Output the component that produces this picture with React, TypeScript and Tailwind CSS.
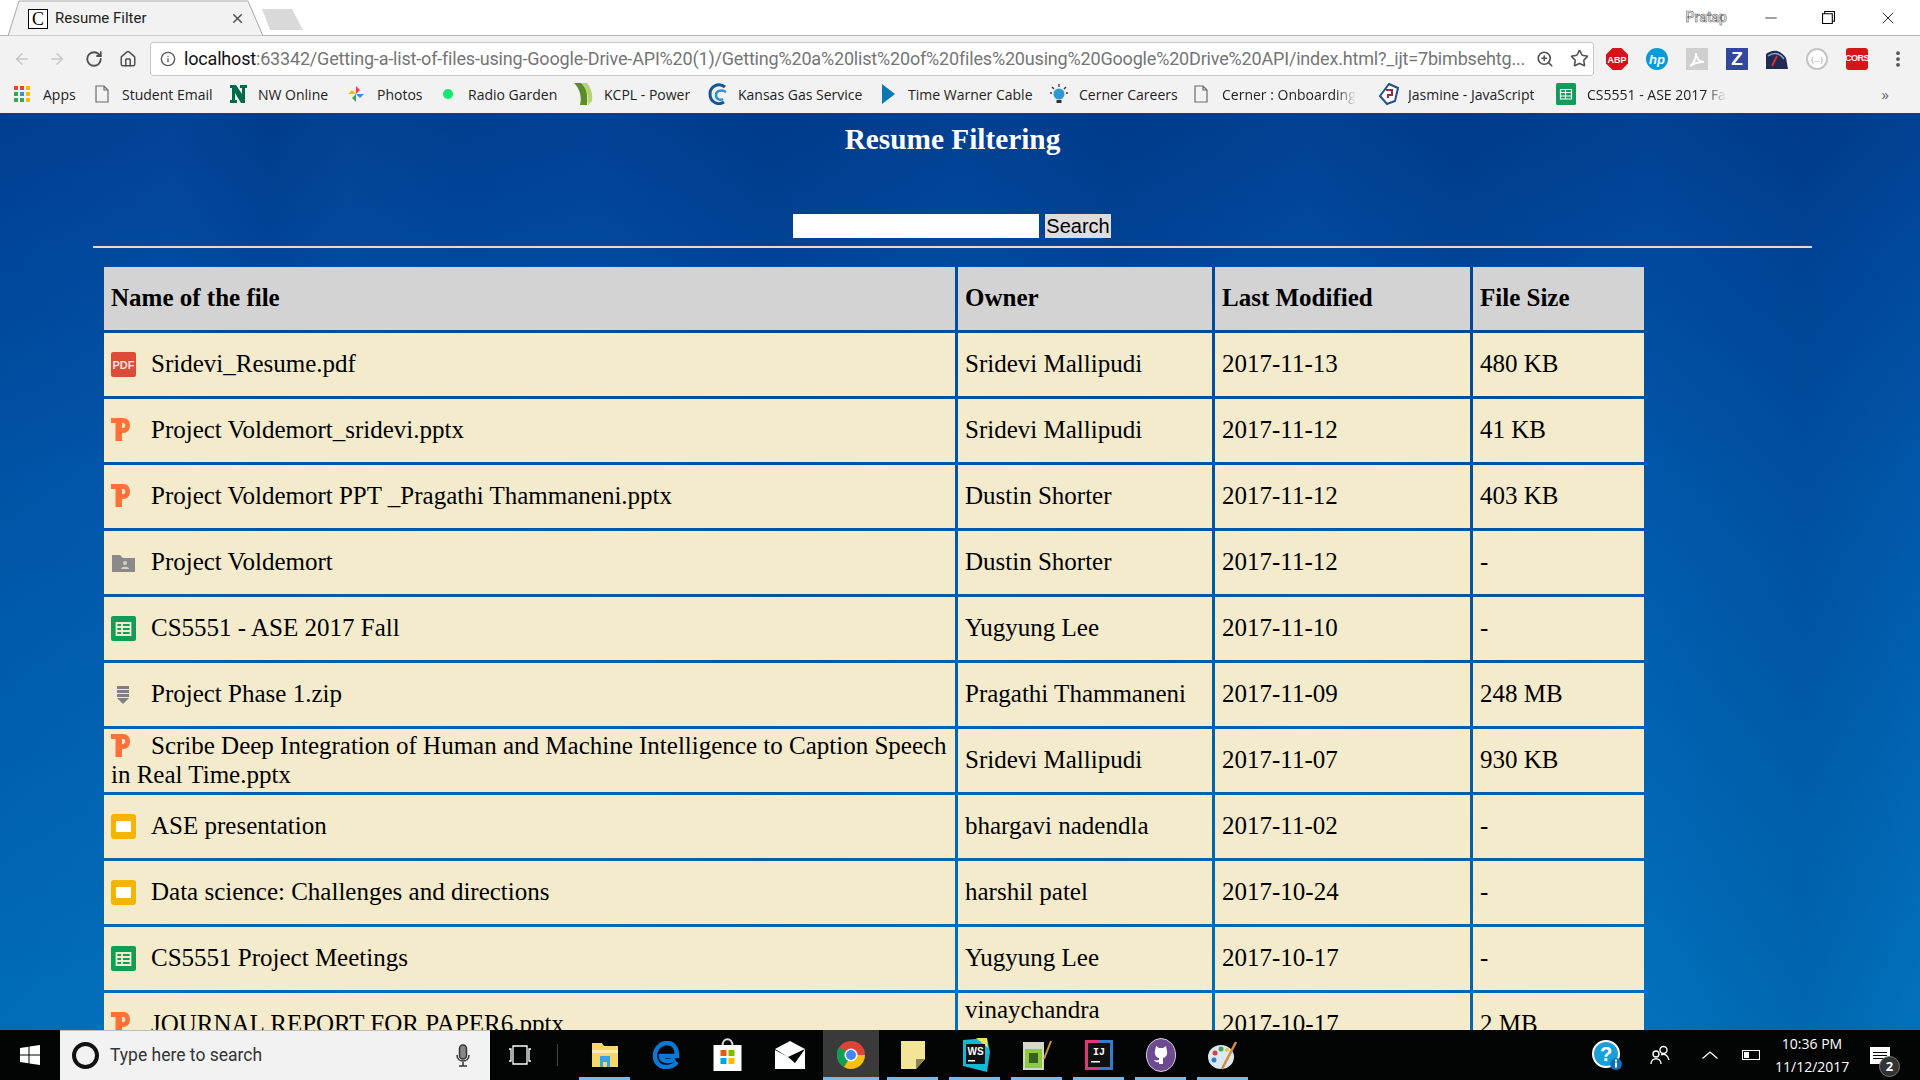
import { ArrowLeft, ArrowRight, Home, Info, Minus, MoreVertical, RotateCw, Star, X, ZoomIn } from "lucide-react";

const rows = [
  { icon: "pdf", name: "Sridevi_Resume.pdf", owner: "Sridevi Mallipudi", date: "2017-11-13", size: "480 KB" },
  { icon: "ppt", name: "Project Voldemort_sridevi.pptx", owner: "Sridevi Mallipudi", date: "2017-11-12", size: "41 KB" },
  { icon: "ppt", name: "Project Voldemort PPT _Pragathi Thammaneni.pptx", owner: "Dustin Shorter", date: "2017-11-12", size: "403 KB" },
  { icon: "folder", name: "Project Voldemort", owner: "Dustin Shorter", date: "2017-11-12", size: "-" },
  { icon: "sheet", name: "CS5551 - ASE 2017 Fall", owner: "Yugyung Lee", date: "2017-11-10", size: "-" },
  { icon: "zip", name: "Project Phase 1.zip", owner: "Pragathi Thammaneni", date: "2017-11-09", size: "248 MB" },
  { icon: "ppt", name: "Scribe Deep Integration of Human and Machine Intelligence to Caption Speech in Real Time.pptx", owner: "Sridevi Mallipudi", date: "2017-11-07", size: "930 KB" },
  { icon: "slides", name: "ASE presentation", owner: "bhargavi nadendla", date: "2017-11-02", size: "-" },
  { icon: "slides", name: "Data science: Challenges and directions", owner: "harshil patel", date: "2017-10-24", size: "-" },
  { icon: "sheet", name: "CS5551 Project Meetings", owner: "Yugyung Lee", date: "2017-10-17", size: "-" },
  { icon: "ppt", name: "JOURNAL REPORT FOR PAPER6.pptx", owner: "vinaychandra kommineni", date: "2017-10-17", size: "2 MB" },
];

function FileIcon({ type }: { type: string }) {
  const cls = "inline-block w-[25px] h-[25px] mr-[15px] align-[-5px]";
  if (type === "pdf")
    return (
      <svg viewBox="0 0 25 25" className={cls}>
        <rect width="25" height="25" rx="2" fill="#dd4b39" />
        <text x="12.5" y="16.500" textAnchor="middle" fontSize="11" fontWeight="700" fill="#f9e3df" fontFamily="Liberation Sans">PDF</text>
      </svg>
    );
  if (type === "ppt")
    return (
      <svg viewBox="0 0 25 25" className={cls}>
        <path d="M0 0h12c4.500 0 7 3 7 7.500s-2.500 7.500-7 7.500h-1v8H4.500V5H0z M11 5v5h1c1.500 0 2.300-1 2.300-2.500S13.500 5 12 5z" fill="#ff7138" fillRule="evenodd" />
      </svg>
    );
  if (type === "folder")
    return (
      <svg viewBox="0 0 25 25" className={cls}>
        <path d="M1 5h8l3 3h12v14H1z" fill="#8a8a8a" />
        <circle cx="14" cy="13" r="2" fill="#d8d2bd" />
        <path d="M10 19c0-3 8-3 8 0z" fill="#d8d2bd" />
      </svg>
    );
  if (type === "sheet")
    return (
      <svg viewBox="0 0 25 25" className={cls}>
        <rect width="25" height="25" rx="2" fill="#0f9d58" />
        <path d="M5.500 7h14v12h-14z M5.500 11h14 M5.500 15h14 M11 7v12" stroke="#f4ebcd" strokeWidth="1.800" fill="none" />
      </svg>
    );
  if (type === "zip")
    return (
      <svg viewBox="0 0 25 25" className={cls}>
        <path d="M6 4h12v3H6z M6 8h12v3H6z M6 12h12v3H6z M6 16h12l-6 6z" fill="#808080" />
      </svg>
    );
  return (
    <svg viewBox="0 0 25 25" className={cls}>
      <rect width="25" height="25" rx="3" fill="#f4b400" />
      <rect x="5" y="7" width="15" height="11" fill="#fff" />
    </svg>
  );
}

const DocGlyph = () => (
  <svg viewBox="0 0 14 18" className="w-[14px] h-[18px]" fill="#f2f2f2" stroke="#6b6b6b" strokeWidth="1.200">
    <path d="M1 1h8l4 4v12H1z M9 1v4h4" />
  </svg>
);

const SheetGlyph = () => (
  <svg viewBox="0 0 20 22" className="w-[20px] h-[22px]">
    <rect width="20" height="22" rx="1.500" fill="#0f9d58" />
    <path d="M4.500 6.500h11v9.500h-11z M4.500 9.500h11 M4.500 13h11 M9.500 6.500V16" stroke="#fff" strokeWidth="1.200" fill="none" />
  </svg>
);

const bookmarks = [
  {
    label: "Apps", width: "w-[81px]", gap: "gap-[13px]",
    icon: (
      <svg viewBox="0 0 16 16" className="w-[16px] h-[16px]">
        <path d="M0 0h4v4H0z M6 0h4v4H6z" fill="#ea4335" /><path d="M12 0h4v4h-4z M12 6h4v4h-4z" fill="#fbbc05" />
        <path d="M0 6h4v4H0z M0 12h4v4H0z M6 12h4v4H6z" fill="#34a853" /><path d="M6 6h4v4H6z" fill="#4285f4" /><path d="M12 12h4v4h-4z" fill="#fbbc05" />
      </svg>
    ),
  },
  { label: "Student Email", width: "w-[135px]", gap: "gap-[13px]", icon: <DocGlyph /> },
  {
    label: "NW Online", width: "w-[117px]", gap: "gap-[11px]",
    icon: (
      <svg viewBox="0 0 17 20" className="w-[17px] h-[20px]">
        <path d="M0 1h6l6 9V4h-2V1h7v3h-2v15h-4L5 9v7h2v3H0v-3h2V4H0z" fill="#006a4d" />
      </svg>
    ),
  },
  {
    label: "Photos", width: "w-[96px]", gap: "gap-[12px]",
    icon: (
      <svg viewBox="0 0 18 18" className="w-[18px] h-[18px]">
        <path d="M9 9V1l4 4z" fill="#ea4335" /><path d="M9 9h8l-4 4z" fill="#4285f4" /><path d="M9 9v8l-4-4z" fill="#34a853" /><path d="M9 9H1l4-4z" fill="#fbbc05" />
      </svg>
    ),
  },
  { label: "Radio Garden", width: "w-[131px]", gap: "gap-[15px]", icon: <span className="w-[10px] h-[10px] rounded-full bg-[#10e86f]" /> },
  {
    label: "KCPL - Power", width: "w-[134px]", gap: "gap-[10px]",
    icon: (
      <svg viewBox="0 0 20 24" className="w-[20px] h-[24px]">
        <path d="M0 1h7c5 4 7 10 6 22H6c2-8 0-16-6-22z" fill="#5b8c2a" /><path d="M7 1h6c4 5 6 11 5 18l-4 4c1-9-1-16-7-22z" fill="#b7d36b" />
      </svg>
    ),
  },
  {
    label: "Kansas Gas Service", width: "w-[174px]", gap: "gap-[10px]",
    icon: (
      <svg viewBox="0 0 20 22" className="w-[20px] h-[22px]" fill="none">
        <path d="M17 4C11-1 2 3 2 11s8 12 14 8" stroke="#14569b" strokeWidth="3" /><path d="M18 9c-5-3-10-1-10 3s4 6 7 4" stroke="#2b8fd0" strokeWidth="2.500" />
      </svg>
    ),
  },
  {
    label: "Time Warner Cable", width: "w-[168px]", gap: "gap-[13px]",
    icon: (
      <svg viewBox="0 0 13 20" className="w-[13px] h-[20px]"><path d="M0 0l13 10L0 20z" fill="#0a77b5" /></svg>
    ),
  },
  {
    label: "Cerner Careers", width: "w-[144px]", gap: "gap-[11px]",
    icon: (
      <svg viewBox="0 0 18 22" className="w-[18px] h-[22px]">
        <circle cx="9" cy="11" r="5.500" fill="#2c9ad1" /><path d="M6.500 17h5v3h-5z" fill="#333" />
        <path d="M9 1v3 M2 4l2 2 M16 4l-2 2 M0 10h2 M16 10h2" stroke="#333" strokeWidth="1.300" />
      </svg>
    ),
  },
  { label: "Cerner : Onboarding", width: "w-[185px]", gap: "gap-[14px]", icon: <DocGlyph />, fade: true },
  {
    label: "Jasmine - JavaScript", width: "w-[177px]", gap: "gap-[9px]",
    icon: (
      <svg viewBox="0 0 20 22" className="w-[20px] h-[22px]">
        <path d="M10 1l9 4-3 13-8 3-7-8z" fill="#fff" stroke="#1f4f8f" strokeWidth="2" />
        <path d="M7 7h6v5H9v3" stroke="#b22234" strokeWidth="2" fill="none" />
      </svg>
    ),
  },
  { label: "CS5551 - ASE 2017 Fa", width: "w-[172px]", gap: "gap-[11px]", icon: <SheetGlyph />, fade: true },
];

function Extension({ children }: { children: React.ReactNode }) {
  return <div className="w-[40px] flex items-center justify-center">{children}</div>;
}

function ChromeBar() {
  return (
    <div className="shrink-0 font-['Open_Sans','Noto_Sans',sans-serif] text-[#222]">
      {/* tab strip */}
      <div className="relative h-[36px] bg-white border-b border-[#b4b4b4] flex items-center">
        <svg viewBox="0 0 310 36" className="absolute left-0 top-0 w-[310px] h-[36px]">
          <path d="M8 36L19 1h229l15 35z" fill="#f2f2f2" stroke="#a8a8a8" />
          <path d="M262 9h30l11 21H270z" fill="#d9d9d9" />
        </svg>
        <div className="relative mt-[2px] ml-[28px] w-[20px] h-[20px] bg-white border border-black flex items-center justify-center font-['Liberation_Serif',serif] text-[18px] leading-none text-black">C</div>
        <span className="relative mt-[2px] ml-[7px] text-[15px] leading-none font-['Roboto',sans-serif]">Resume Filter</span>
        <X className="relative mt-[2px] ml-[83px] w-[15px] h-[15px] text-[#555]" strokeWidth={2.500} />
        <div className="ml-auto flex items-center h-full">
          <span className="text-[14px] font-semibold text-[#eeeeee] mr-[15px] [-webkit-text-stroke:0.5px_#555] font-['Roboto',sans-serif]">Pratap</span>
          <div className="w-[58px] flex justify-center"><Minus className="w-[18px] h-[18px] text-black" strokeWidth={1} /></div>
          <div className="w-[56px] flex justify-center">
            <svg viewBox="0 0 12 12" className="w-[13px] h-[13px]" fill="none" stroke="#000"><path d="M.5 2.500h9v9h-9z M2.500 2.500v-2h9v9h-2" /></svg>
          </div>
          <div className="w-[64px] flex justify-center"><X className="w-[20px] h-[20px] text-black" strokeWidth={1} /></div>
        </div>
      </div>
      {/* toolbar */}
      <div className="h-[41px] pt-[4px] bg-[#f2f2f2] flex items-center pl-[13px]">
        <ArrowLeft className="w-[18px] h-[18px] text-[#c6c6c6]" strokeWidth={2} />
        <ArrowRight className="ml-[17px] w-[18px] h-[18px] text-[#c6c6c6]" strokeWidth={2} />
        <RotateCw className="ml-[19px] w-[18px] h-[18px] text-[#505050]" strokeWidth={2.400} />
        <Home className="ml-[16px] w-[18px] h-[18px] text-[#505050]" strokeWidth={2} />
        <div className="ml-[13px] w-[1444px] h-[34px] bg-white border border-[#c8c8c8] rounded-[3px] flex items-center pl-[9px] pr-[4px]">
          <Info className="w-[16px] h-[16px] text-[#5a5a5a] shrink-0" strokeWidth={2} />
          <div className="ml-[8px] w-[1344px] text-[18px] tracking-[-0.18px] whitespace-nowrap overflow-hidden font-['Roboto',sans-serif] text-[#757575]">
            <span className="text-[#111]">localhost</span>:63342/Getting-a-list-of-files-using-Google-Drive-API%20(1)/Getting%20a%20list%20of%20files%20using%20Google%20Drive%20API/index.html?_ijt=7bimbsehtg...
          </div>
          <ZoomIn className="ml-auto w-[18px] h-[18px] text-[#505050]" strokeWidth={2.200} />
          <Star className="ml-[16px] w-[19px] h-[19px] text-[#505050]" strokeWidth={2} />
        </div>
        <div className="ml-[3px] flex items-center">
          <Extension>
            <svg viewBox="0 0 22 22" className="w-[22px] h-[22px]">
              <path d="M6.500 0h9L22 6.500v9L15.500 22h-9L0 15.500v-9z" fill="#d5111a" />
              <text x="11" y="14.500" textAnchor="middle" fontSize="9" fontWeight="700" fill="#fff" fontFamily="Liberation Sans">ABP</text>
            </svg>
          </Extension>
          <Extension>
            <svg viewBox="0 0 22 22" className="w-[22px] h-[22px]">
              <circle cx="11" cy="11" r="11" fill="#0a9ad7" />
              <text x="11" y="16" textAnchor="middle" fontSize="13" fontWeight="700" fontStyle="italic" fill="#fff" fontFamily="Liberation Sans">hp</text>
            </svg>
          </Extension>
          <Extension>
            <svg viewBox="0 0 22 22" className="w-[22px] h-[22px]">
              <rect width="22" height="22" fill="#cfcfcf" />
              <path d="M4 18c4-3 6-8 6-13 0 5 3 9 8 9-5 0-10 1-14 4z" fill="none" stroke="#fff" strokeWidth="1.800" />
            </svg>
          </Extension>
          <Extension>
            <div className="w-[22px] h-[22px] bg-[#31469c] text-white flex items-center justify-center text-[19px] font-bold font-['Liberation_Sans',sans-serif] leading-none">Z</div>
          </Extension>
          <Extension>
            <svg viewBox="0 0 22 22" className="w-[22px] h-[22px]">
              <path d="M0 6C6 1 14 1 20 10l2 11H0z" fill="#1e2b52" />
              <path d="M2 8c6-4 12-3 16 3" stroke="#8fa6d0" strokeWidth="1.500" fill="none" />
              <path d="M6 18l5-10" stroke="#e02b2b" strokeWidth="2" />
            </svg>
          </Extension>
          <Extension>
            <div className="w-[22px] h-[22px] rounded-full border-2 border-[#c4c4c4] flex items-center justify-center text-[8px] text-[#999] leading-none bg-white">{"{...}"}</div>
          </Extension>
          <Extension>
            <div className="w-[22px] h-[22px] rounded-[3px] bg-[#d8141a] text-white flex items-center justify-center text-[9px] tracking-[-0.5px] font-bold font-['Liberation_Sans',sans-serif] leading-none">CORS</div>
          </Extension>
          <MoreVertical className="ml-[11px] w-[20px] h-[20px] text-[#505050]" strokeWidth={2.500} />
        </div>
      </div>
      {/* bookmarks */}
      <div className="h-[36px] pb-[2px] bg-[#f2f2f2] flex items-center pl-[14px] text-[14px] overflow-hidden">
        {bookmarks.map((b) => (
          <div key={b.label} className={`flex items-center shrink-0 ${b.width} ${b.gap}`}>
            {b.icon}
            <span
              className={`whitespace-nowrap overflow-hidden ${
                b.fade ? "[mask-image:linear-gradient(to_right,black_85%,transparent)]" : ""
              }`}
            >
              {b.label}
            </span>
          </div>
        ))}
        <span className="ml-auto mr-[31px] text-[15px] text-[#666] leading-none">»</span>
      </div>
    </div>
  );
}

function Taskbar() {
  const underline = "absolute bottom-0 left-0 right-0 h-[3px] bg-[#76b9ed]";
  return (
    <div className="h-[50px] shrink-0 bg-[#030504] flex items-center text-white font-['Open_Sans','Noto_Sans',sans-serif]">
      <div className="w-[60px] flex justify-center">
        <svg viewBox="0 0 20 20" className="w-[20px] h-[20px]" fill="#fff">
          <path d="M0 3l8.500-1.200v7.700H0z M9.500 1.600L20 0v9.500H9.500z M0 10.500h8.500v7.700L0 17z M9.500 10.500H20V20L9.500 18.400z" />
        </svg>
      </div>
      <div className="w-[430px] h-full bg-[#f2f2f2] border-t border-[#bdbdbd] flex items-center pl-[12px] pr-[20px] text-[#333]">
        <span className="w-[27px] h-[27px] rounded-full border-[4px] border-[#111]" />
        <span className="ml-[11px] text-[17.5px] font-['Roboto',sans-serif]">Type here to search</span>
        <svg viewBox="0 0 14 24" className="ml-auto w-[14px] h-[24px]" fill="none" stroke="#333" strokeWidth="1.500">
          <rect x="3.500" y="1" width="7" height="14" rx="3.500" fill="#888" /><path d="M1 11c0 8 12 8 12 0 M7 18v4 M3 22h8" />
        </svg>
      </div>
      <div className="w-[60px] mr-[7px] flex justify-center">
        <svg viewBox="0 0 24 20" className="w-[24px] h-[20px]" fill="none" stroke="#fff" strokeWidth="1.300">
          <path d="M5 1h14v18H5z M1 4h2v12H1 M23 4h-2v12h2" />
        </svg>
      </div>
      <span className="w-px h-[22px] bg-[#444]" />
      <div className="relative ml-[21px] w-[51px] h-full flex items-center justify-center">
        <svg viewBox="0 0 28 26" className="w-[28px] h-[26px]">
          <path d="M1 1h10l2 3h14v21H1z" fill="#f6d76c" /><path d="M1 8h26v3H1z" fill="#fdeeb0" /><path d="M9 14h10v11h-3v-5h-4v5H9z" fill="#3aa3dc" />
        </svg>
        <span className={underline} />
      </div>
      <div className="ml-[10px] w-[52px] flex justify-center">
        <svg viewBox="0 0 28 28" className="w-[28px] h-[28px]" fill="none">
          <path d="M25 21c-3 4-7 5-11 5C7 26 3 21 3 15 3 7 9 2 15 2c7 0 10 6 10 13H9c0 5 7 7 14 3" stroke="#0a78d7" strokeWidth="4.500" />
        </svg>
      </div>
      <div className="ml-[10px] w-[51px] flex justify-center">
        <svg viewBox="0 0 28 34" className="w-[29px] h-[34px]">
          <path d="M9 8c0-9 10-9 10 0" fill="none" stroke="#ddd" strokeWidth="2" />
          <rect y="7" width="28" height="26" fill="#fff" />
          <path d="M7 12h6v6H7z" fill="#f25022" /><path d="M15 12h6v6h-6z" fill="#7fba00" /><path d="M7 20h6v6H7z" fill="#00a4ef" /><path d="M15 20h6v6h-6z" fill="#ffb900" />
        </svg>
      </div>
      <div className="w-[62px] ml-[6px] flex justify-center">
        <svg viewBox="0 0 30 28" className="w-[30px] h-[28px]">
          <path d="M0 8L15 0l15 8v20H0z" fill="#fff" /><path d="M0 8l13 8 17-8-10 14-7-6L0 9z" fill="#000" />
        </svg>
      </div>
      <div className="relative ml-[2px] w-[56px] h-full bg-[#3a3a3a] flex items-center justify-center">
        <svg viewBox="0 0 28 32" className="w-[28px] h-[32px]">
          <circle cx="14" cy="16" r="14" fill="#dc4437" />
          <path d="M14 16L28 16A14 14 0 0 1 7 28z" fill="#f4c20d" />
          <path d="M14 16L7 28A14 14 0 0 1 2 8z" fill="#0f9d58" />
          <circle cx="14" cy="16" r="6.500" fill="#fff" /><circle cx="14" cy="16" r="5" fill="#4285f4" />
        </svg>
        <span className={underline} />
      </div>
      <div className="relative ml-[8px] w-[51px] h-full flex items-center justify-center">
        <svg viewBox="0 0 24 28" className="w-[24px] h-[28px]">
          <path d="M0 0h24v18l-9 10H0z" fill="#f3e598" /><path d="M15 28v-10h9z" fill="#8c8453" />
        </svg>
        <span className={underline} />
      </div>
      <div className="relative ml-[11px] w-[51px] h-full flex items-center justify-center">
        <svg viewBox="0 0 30 34" className="w-[30px] h-[34px]">
          <path d="M3 2l24-2 3 14-3 20L3 28z" fill="#14b8d4" /><path d="M16 0l11 0 1 10z" fill="#e9e45a" />
          <rect x="6" y="6" width="19" height="20" fill="#111" />
          <text x="15.500" y="17" textAnchor="middle" fontSize="10" fontWeight="700" fill="#fff" fontFamily="Liberation Sans">WS</text>
          <path d="M8 22h7v1.500H8z" fill="#fff" />
        </svg>
        <span className={underline} />
      </div>
      <div className="relative ml-[11px] w-[51px] h-full flex items-center justify-center">
        <svg viewBox="0 0 30 32" className="w-[30px] h-[32px]">
          <path d="M1 3h21v28H1z" fill="#d7d7c8" /><path d="M3 10h17v19H3z" fill="#8ccb3f" />
          <path d="M7 14h9v10H7z" fill="#3a5f20" /><path d="M22 20L29 2" stroke="#c59a2c" strokeWidth="2" />
        </svg>
        <span className={underline} />
      </div>
      <div className="relative ml-[11px] w-[51px] h-full flex items-center justify-center">
        <svg viewBox="0 0 28 30" className="w-[28px] h-[30px]">
          <rect width="28" height="30" fill="#e5337e" /><path d="M14 0h14v30H14z" fill="#2d7fd3" />
          <rect x="3" y="3" width="22" height="24" fill="#111" />
          <text x="14" y="15" textAnchor="middle" fontSize="10" fontWeight="700" fill="#fff" fontFamily="Liberation Mono">IJ</text>
          <path d="M6 21h9v1.500H6z" fill="#fff" />
        </svg>
        <span className={underline} />
      </div>
      <div className="relative ml-[11px] w-[51px] h-full flex items-center justify-center">
        <svg viewBox="0 0 30 34" className="w-[30px] h-[34px]">
          <ellipse cx="15" cy="17" rx="14.500" ry="16.500" fill="#6e4a91" stroke="#d9d0e3" strokeWidth="1" />
          <path d="M10 8l3 2h4l3-2 1 5c1 4-2 7-4 7v6h-4v-2c-3 1-4-1-5-2 2 0 2 1 5 0v-2c-2 0-5-3-4-7z" fill="#fff" />
        </svg>
        <span className={underline} />
      </div>
      <div className="relative ml-[11px] w-[51px] h-full flex items-center justify-center">
        <svg viewBox="0 0 30 32" className="w-[30px] h-[32px]">
          <ellipse cx="13" cy="18" rx="13" ry="12" fill="#dce9f2" />
          <circle cx="7" cy="14" r="2.500" fill="#e23b3b" /><circle cx="13" cy="10" r="2.500" fill="#3aa655" /><circle cx="6" cy="21" r="2.500" fill="#2d7fd3" /><circle cx="19" cy="11" r="2" fill="#f2c230" />
          <path d="M14 30L28 3" stroke="#d98b3c" strokeWidth="2.500" />
        </svg>
        <span className={underline} />
      </div>
      <div className="ml-auto flex items-center h-full">
        <svg viewBox="0 0 30 30" className="w-[30px] h-[30px]">
          <circle cx="14" cy="14" r="13" fill="#1a9fdb" stroke="#fff" strokeWidth="2" />
          <text x="14" y="21" textAnchor="middle" fontSize="20" fontWeight="700" fill="#fff" fontFamily="Liberation Sans">?</text>
          <circle cx="24" cy="24" r="6" fill="#1170b5" /><path d="M23 22.500h2v5h-2z M23 19.500h2v2h-2z" fill="#fff" />
        </svg>
        <svg viewBox="0 0 20 20" className="ml-[28px] w-[20px] h-[20px]" fill="none" stroke="#fff" strokeWidth="1.400">
          <circle cx="13.500" cy="5" r="3.500" /><circle cx="6" cy="9" r="3" /><path d="M1 19c0-7 10-7 10 0 M11 10c3-2 7 0 8 5" />
        </svg>
        <svg viewBox="0 0 16 8" className="ml-[32px] w-[16px] h-[8px]" fill="none" stroke="#fff" strokeWidth="1.300"><path d="M.5 7.500L8 1l7.500 6.500" /></svg>
        <div className="ml-[24px] w-[18px] h-[10px] border border-white flex items-center pl-px">
          <span className="w-[5px] h-[6px] bg-white" />
        </div>
        <div className="ml-[15px] w-[74px] text-center text-[14px] leading-[23px]">
          <div>10:36 PM</div>
          <div>11/12/2017</div>
        </div>
        <div className="relative ml-[21px] mr-[30px] w-[20px] h-[17px] bg-white flex flex-col justify-center gap-[2px] px-[3px]">
          <span className="h-px bg-black" /><span className="h-px bg-black" /><span className="h-px bg-black" />
          <span className="absolute left-[9px] top-[9px] w-[21px] h-[21px] rounded-full bg-[#333] border border-[#777] flex items-center justify-center text-[13px] font-bold leading-none">2</span>
        </div>
      </div>
    </div>
  );
}

export default function App() {
  const cell = "bg-[#f4ebcd] px-[7px] pt-0 pb-[2px] text-left align-middle";
  const head = "bg-[#d3d3d3] px-[7px] pt-0 pb-[2px] text-left font-bold h-[63px]";
  return (
    <div className="h-[1080px] w-[1920px] overflow-hidden flex flex-col">
      <ChromeBar />
      <div className="flex-1 min-h-0 overflow-hidden pl-[93px] font-['Liberation_Serif',serif] text-black bg-[linear-gradient(90deg,rgba(0,50,130,0.10)_0%,rgba(30,90,190,0.10)_9%,rgba(0,40,110,0.12)_14%,rgba(40,90,160,0.08)_18%,rgba(0,40,110,0.04)_24%,rgba(20,80,180,0.08)_31%,rgba(0,30,100,0.14)_40%,rgba(20,80,170,0.06)_50%,rgba(0,30,100,0.14)_58%,rgba(30,90,170,0.05)_68%,rgba(0,30,90,0.12)_76%,rgba(20,80,160,0.06)_86%,rgba(0,30,90,0.14)_94%,rgba(30,90,170,0.05)_100%),linear-gradient(180deg,#003f90_0%,#00489c_15%,#0058aa_42%,#0066b4_72%,#0073bd_100%)]">
        <div className="w-[1719px]">
          <h1 className="h-[51px] pt-[9px] text-center text-[29.3px] leading-[34px] font-bold text-white">Resume Filtering</h1>
          <div className="mt-[50px] flex justify-center gap-[6px] h-[24px] pr-[1px]">
            <input className="w-[246px] h-[24px] bg-white outline-none" />
            <button className="w-[66px] h-[24px] bg-[#dddddd] text-[20px] leading-[24px] font-['Liberation_Sans',sans-serif] text-black">Search</button>
          </div>
          <hr className="mt-[8px] h-[2px] border-0 bg-[#dcdcdc]" />
          <table className="ml-[8px] mt-[16px] w-[1540px] table-fixed border-separate border-spacing-x-[3px] border-spacing-y-[3px] text-[25px] leading-[29px]">
            <colgroup>
              <col className="w-[851px]" />
              <col className="w-[254px]" />
              <col className="w-[255px]" />
              <col className="w-[171px]" />
            </colgroup>
            <thead>
              <tr>
                <th className={head}>Name of the file</th>
                <th className={head}>Owner</th>
                <th className={head}>Last Modified</th>
                <th className={head}>File Size</th>
              </tr>
            </thead>
            <tbody>
              {rows.map((r) => (
                <tr key={r.name} className="h-[63px]">
                  <td className={cell}>
                    <FileIcon type={r.icon} />
                    {r.name}
                  </td>
                  <td className={cell}>{r.owner}</td>
                  <td className={cell}>{r.date}</td>
                  <td className={cell}>{r.size}</td>
                </tr>
              ))}
            </tbody>
          </table>
        </div>
      </div>
      <Taskbar />
    </div>
  );
}
